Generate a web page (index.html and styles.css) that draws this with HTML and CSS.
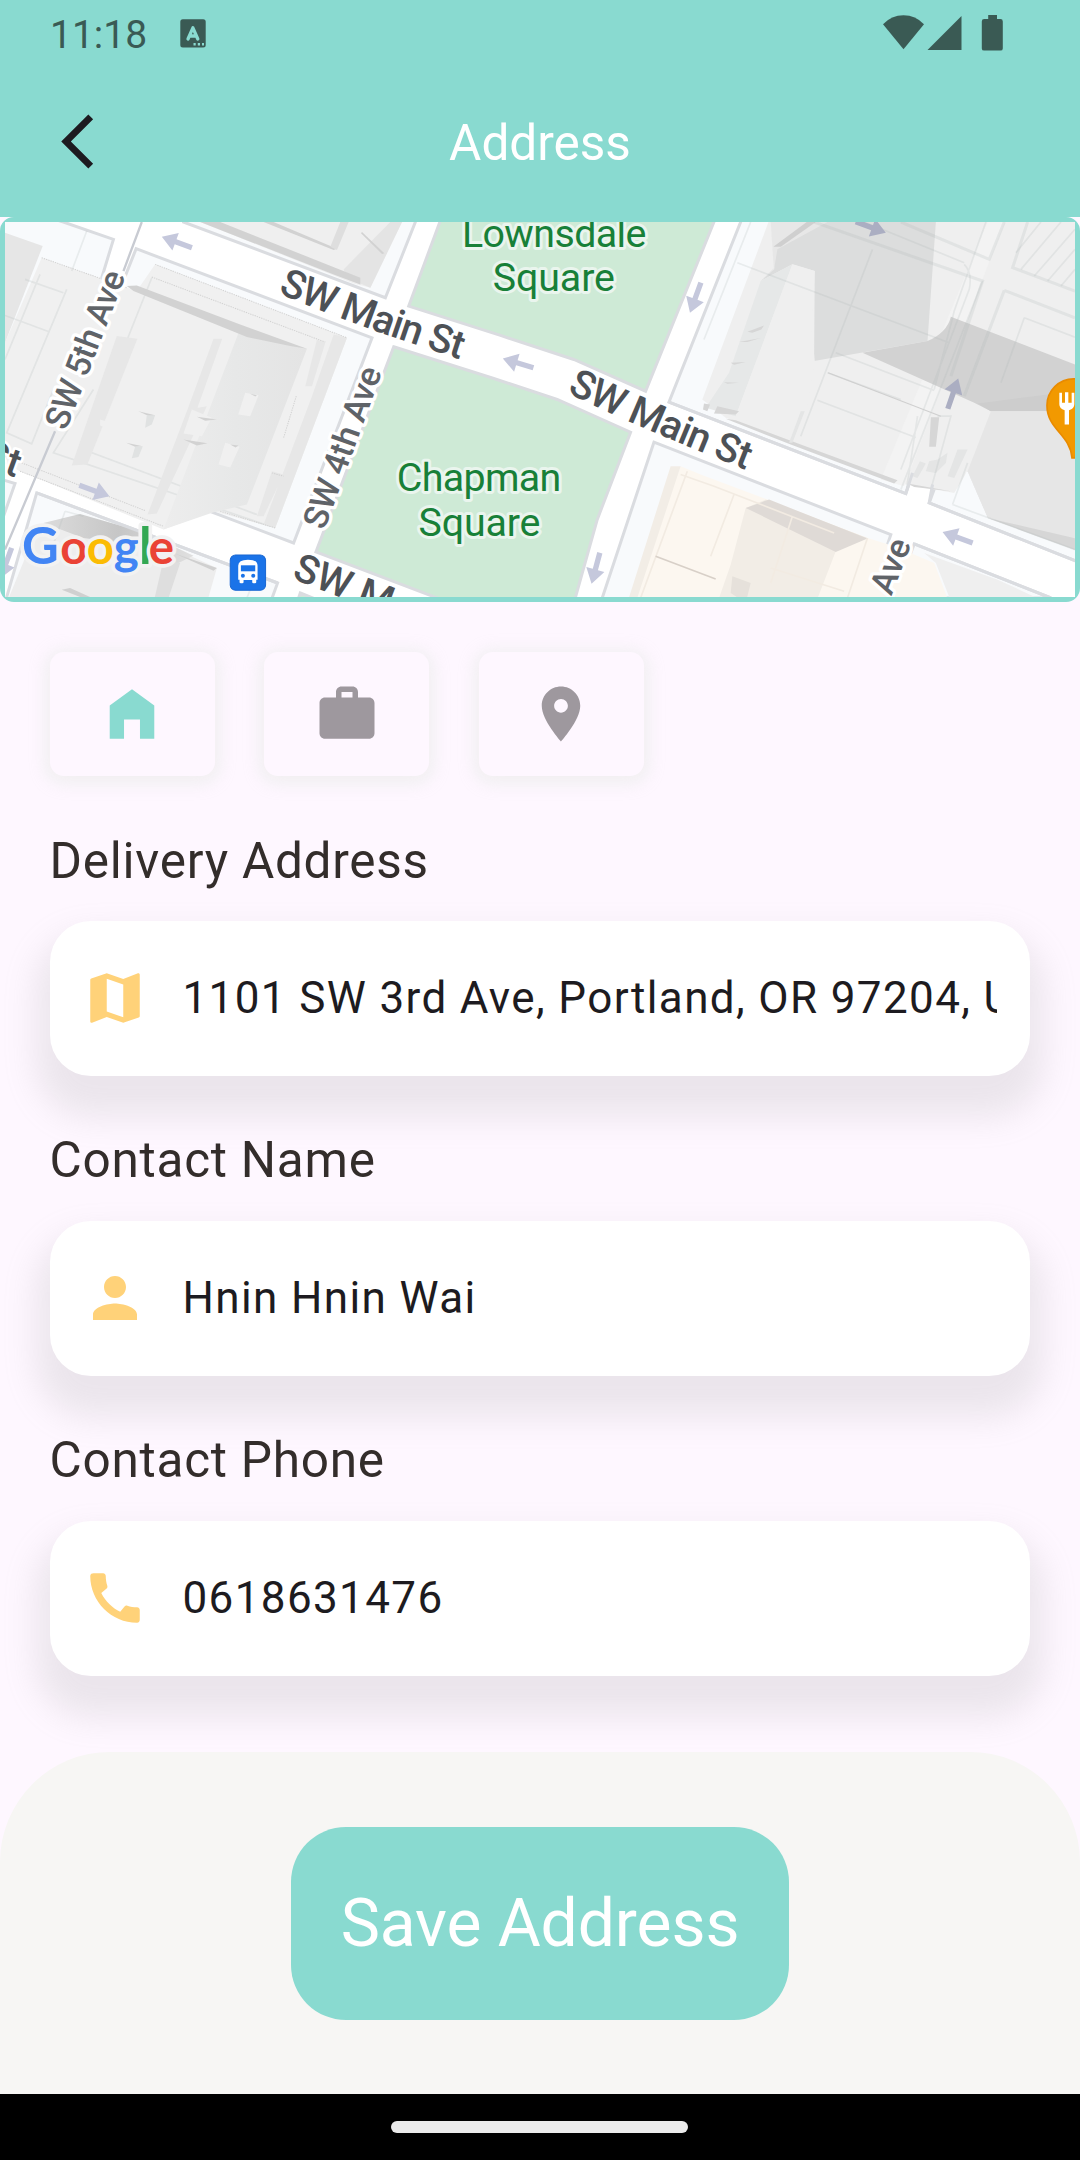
FILE: index.html
```html
<!DOCTYPE html>
<html lang="en">
<head>
<meta charset="utf-8">
<title>Address</title>
<link rel="stylesheet" href="styles.css">
</head>
<body>
<div class="screen">
  <header class="header">
    <div class="status-bar">
      <div class="status-left">
        <span class="clock">11:18</span>
        <svg class="status-app" viewBox="0 0 26 29" aria-hidden="true">
          <rect x="0.3" y="0.3" width="25.4" height="28.2" rx="2.5"/>
          <path class="cut-line" d="M8 20 12.900 8.800 17.800 20M10 17h6"/>
          <path class="cut-fill" d="M13.500 24h2.200v2.400h-2.200zM17.800 24H20v2.400h-2.200zM22 24h2v2.400h-2z"/>
        </svg>
      </div>
      <svg class="status-icons" viewBox="0 0 120 36" aria-hidden="true">
        <path d="M0 9.300Q8.500 0.300 20.500 0.300T41 9.300L20.500 34.300Z"/>
        <path d="M78.500 1v34H44.500Z"/>
        <path d="M105.200 0h8.800v4h3.400q2.400 0 2.400 2.400v27q0 2.200-2.400 2.200H101.200q-2.400 0-2.400-2.200v-27Q98.800 4 101.200 4h4Z"/>
      </svg>
    </div>
    <div class="app-bar">
      <button class="back" aria-label="Back">
        <svg viewBox="0 0 24 24"><path d="M17.770 3.770 16 2 6 12l10 10 1.770-1.770L9.540 12z"/></svg>
      </button>
      <h1 class="title">Address</h1>
      <span class="bar-end"></span>
    </div>
  </header>

  <div class="map-frame">
    <svg class="map" viewBox="15 38 3207 1124" preserveAspectRatio="none">
      <defs>
        <path id="arrow" d="M0 0 44-28V-8H96V8H44V28Z"/>
        <path id="main-west" d="M832 250Q1060 350 1450 472"/>
        <path id="main-east" d="M1698 548Q1880 642 2300 806"/>
        <linearGradient id="shade" x1="0" x2="1"><stop offset="0" stop-color="#dcdcdc"/><stop offset=".5" stop-color="#c6c6c6"/><stop offset="1" stop-color="#e0e0e0"/></linearGradient>
        <linearGradient id="fade" x1="0" x2="1"><stop offset="0" stop-color="#ededed"/><stop offset=".5" stop-color="#e7e8e8"/><stop offset="1" stop-color="#e4e4e4"/></linearGradient>
      </defs>
      <rect x="0" y="0" width="3240" height="1200" fill="#fff"/>

      <!-- city blocks -->
      <g class="block">
        <path d="M0-20 190 38 340 90 305 205 100 790 0 740Z"/>
        <path d="M408 118 1115 385 880 1000 165 730Z"/>
        <path d="M550 38 1155 265 1245 38V0H550Z"/>
        <path d="M110 850 832 1120 810 1180H15Z"/>
        <path d="M0 808 45 822 0 950Z"/>
        <path d="M2005 578 2715 852 2770 690 3240 400V0H2235Z"/>
        <path d="M2785 880 3240 1060V400L2960 400Z"/>
        <path d="M1960 698 2670 975 2600 1180H1800Z"/>
        <path d="M2740 1003 3150 1165H2680Z"/>
      </g>
      <g class="park">
        <path d="M1325 20H2147L1935 545 1720 450 1500 378 1225 290Z"/>
        <path d="M1180 412 1480 507 1670 570 1890 668 1790 930 1720 1180H1350L947 1027Z"/>
        <path d="M900 1150 975 1180H890Z"/>
      </g>

      <!-- upper left and main west building -->
      <path fill="#f0f0f0" d="M125 145 305 208 380 235 410 245 465 165 1040 385 825 955 640 905 490 960 60 785 15 760V400Z"/>
      <path fill="#e6e6e6" d="M15 70 128 110 15 400Z"/>
      <path class="seam" d="M260 65 215 185M75 210 190 250M120 195 15 450M15 318 145 366M200 240 20 670 95 703 160 540M455 205 250 720 770 915M280 540 160 730 810 950"/>
      <path fill="#e7e7e7" d="M350 380 412 388 262 765 215 768Z"/>
      <path fill="url(#fade)" d="M715 370 920 418 740 885 640 908 490 960Z"/>
      <path fill="#e7e7e7" d="M640 388H666L590 600H562ZM562 600 620 590 470 912 442 915ZM1000 375 1040 385 825 955 790 945 935 560ZM950 390 975 400 935 530H915ZM815 785 850 795 790 920H770Z"/>
      <path fill="#f0f0f0" d="M735 550 775 557 750 620 714 615ZM575 600 635 625 605 680 550 672ZM675 700 718 712 690 774 655 765ZM300 630 340 642 325 657 300 648Z"/>
      <path fill="#d2d2d2" d="M380 230 410 228 720 345 920 418 870 410 740 383 400 245ZM590 622 650 630 615 634ZM550 690 622 701 590 708ZM415 605 465 617 450 622ZM378 700 428 710 405 712ZM690 705 715 708 706 714ZM750 553 770 557 765 561Z"/>
      <path fill="#e0e2e2" d="M440 617 465 617 455 645 435 655ZM405 712 428 710 415 742 395 746Z"/>
      <path class="dots" d="M125 145 380 235M465 165 1040 385M455 203 975 398M65 760 435 903M60 785 490 950M660 905 825 955M815 790 850 800M888 560 850 685"/>

      <!-- bottom left building -->
      <path fill="#ededed" d="M100 950 240 915 430 975 650 1075 620 1180H20L110 960Z"/>
      <path fill="url(#shade)" d="M130 940 240 913 430 968 580 1038 530 1062 440 1010 250 985Z"/>
      <path fill="#dedede" d="M490 1050 540 1060 500 1180H460Z"/>
      <path fill="#d0d0d0" d="M185 1140 210 1135 270 1162H240ZM520 1030 650 1075 640 1083Z"/>
      <path class="seam" d="M195 905 140 1060M750 1140 740 1165M195 905 250 920"/>

      <!-- top building -->
      <path fill="#efefef" d="M600 38H1205L1110 235 1060 222Z"/>
      <path fill="#e4e4e4" d="M1170 38H1205L1110 235 1040 205 1030 180Z"/>
      <path fill="#d2d2d2" d="M600 38H660L1080 205V225L1000 195ZM790 38H820L1010 118 1000 122ZM1085 68 1152 132 1145 134 1082 72Z"/>
      <path fill="#dedede" d="M1020 38H1045L1010 122 990 112Z"/>

      <!-- east buildings -->
      <path fill="#efefef" d="M2310 20H3240V1028L2960 925 2900 785 2860 850 2690 820 2175 625 2105 570Z"/>
      <path fill="#f3f3f3" d="M2960 38H3010L2710 830 2640 810Z"/>
      <path fill="#e4e4e4" d="M2310 38H2540L2330 165 2285 210 2320 190Z" opacity=".7"/>
      <path fill="#dcdddd" d="M2480 38H2805L2780 395 2440 455 2442 185 2375 165 2280 215 2320 180 2330 120Z"/>
      <path fill="#cfcfcf" d="M2418 38H2445L2340 112 2318 112Z"/>
      <path fill="#e6e8e8" d="M2280 215 2375 165 2205 620 2115 595 2185 490Z"/>
      <path fill="#efefef" d="M2375 165 2442 185 2432 350 2442 455 2400 700 2205 620Z"/>
      <path fill="#d2d2d2" d="M2585 430 2780 395Q2838 370 2850 322L3240 472V605H2970L2920 580Z"/>
      <path fill="#cdcdcd" d="M2970 605 2930 582 3240 542V605Z"/>
      <path fill="#e6e6e6" d="M2970 605H3240V1000L2960 925 2900 785Z"/>
      <path fill="#f8fafc" d="M2897 785 2960 925 2860 885Z"/>
      <path fill="#d6d6d6" d="M2175 628 2205 632 2400 705 2690 812 2680 822 2370 705ZM2720 822 2850 845 2740 832ZM2960 925 3240 990V1028ZM2240 367 2290 348 2282 360 2255 370ZM2215 398 2280 386 2240 398ZM2190 460 2235 458 2200 466ZM2170 518 2215 520 2180 523ZM2790 623H2815L2805 712H2785ZM2110 582 2128 585 2120 605 2107 600ZM2150 590 2215 605 2205 615 2140 612Z"/>
      <path fill="#e4e5e5" d="M2757 755 2775 762 2750 805 2735 800ZM2785 755 2810 750 2840 730 2835 760 2805 790 2775 785ZM2870 720H2900L2860 805 2840 800ZM2400 605H2412L2375 700H2365Z"/>
      <path class="seam" d="M2250 38 2110 390M2210 160 2845 400M2615 120 2400 680M2505 430 2800 543M2450 572 2745 684M2480 490 2700 570M2955 38 2860 305 2800 540M2750 620 2715 852M2945 215 2700 840M2810 620 2850 620 2790 840M2890 165Q2915 190 2905 240L2700 780M3070 325 3222 383M3070 325 3000 520M2590 38 2890 160M2855 885 2900 760M2855 885 3222 1020"/>
      <path class="road-seam" d="M2700 38 2965 150 3010 38M3080 38 3035 175 3222 245M2440 38 2945 215 2850 500M3010 243 3222 325M3010 243 2890 560"/>
      <path class="seam" d="M3222 60 3100 200M3222 120 3140 215M3222 180 3180 230M3180 38 3060 180M3120 38 3045 130"/>
      <path stroke="#cfcfcf" stroke-width="3" fill="none" d="M2482 490 2820 620"/>

      <!-- south-east building -->
      <path fill="#fcf7f0" d="M2040 770 2100 795 2300 870 2600 985 2680 1010 2800 1060 2845 1180H1885Z"/>
      <path fill="#f2ede6" d="M2010 770 2040 770 1905 1180H1880ZM2235 895 2295 870 2600 985 2505 1025 2445 1180H2150L2190 1065Z"/>
      <path fill="#dfdad6" d="M2235 895 2305 870 2600 987 2505 1027Z"/>
      <path fill="#e6e1db" d="M2195 1100 2250 1120 2235 1180 2190 1150Z"/>
      <path class="beige-seam" d="M2040 795 2140 830 2500 970M2200 855 2130 1040M2375 920 2310 1120M2310 1075 2530 1145M2060 785 1920 1165M2600 985 2540 1165"/>
      <path stroke="#d8d0c8" stroke-width="5" fill="none" d="M1965 1040 2145 1108"/>
      <path fill="#efefef" d="M2770 1030 2990 1110 3130 1175H2850L2805 1060Z"/>

      <!-- kerb lines that stay above the buildings -->
      <path class="kerb" d="M2005 578 2715 852 2735 790M2795 825 2785 880 3240 1060M2740 1003 3150 1165M110 850 832 1120"/>
      <path class="avenue-line" d="M425 38 370 185M165 665 15 1020"/>

      <g fill="#c5c8dc">
        <use href="#arrow" transform="translate(485 82) rotate(20)"/>
        <use href="#arrow" transform="translate(328 860) rotate(200)"/>
        <use href="#arrow" transform="translate(1507 447) rotate(17)"/>
        <use href="#arrow" transform="translate(2068 310) rotate(-70)"/>
        <use href="#arrow" transform="translate(1773 1122) rotate(-75)"/>
        <use href="#arrow" transform="translate(2825 967) rotate(20)"/>
        <use href="#arrow" transform="translate(2 1105) rotate(-70)"/>
      </g>
      <g fill="#abaec2">
        <use href="#arrow" transform="translate(2655 70) rotate(200)"/>
        <use href="#arrow" transform="translate(2872 507) rotate(109)"/>
      </g>

      <g class="street">
        <text><textPath href="#main-west" textLength="582">SW Main St</textPath></text>
        <text><textPath href="#main-east" textLength="586">SW Main St</textPath></text>
        <text transform="translate(872 1106) rotate(21)">SW M</text>
        <text transform="translate(46 804) rotate(20)" text-anchor="end">St</text>
      </g>
      <g class="avenue">
        <text transform="translate(198 666) rotate(-69)" textLength="500">SW 5th Ave</text>
        <text transform="translate(972 964) rotate(-70)" textLength="508">SW 4th Ave</text>
        <text transform="translate(2732 1002) rotate(-69)" text-anchor="end">Ave</text>
      </g>
      <g class="park-name">
        <text x="1661" y="112" textLength="553">Lownsdale</text>
        <text x="1660" y="246" textLength="366">Square</text>
        <text x="1436" y="844" textLength="493">Chapman</text>
        <text x="1437" y="978" textLength="366">Square</text>
      </g>
      <text class="brand" y="1064"><tspan class="brand-tall" x="66" fill="#4285f4">G</tspan><tspan x="181" fill="#ea4335">o</tspan><tspan x="260" fill="#fbbc04">o</tspan><tspan x="341" fill="#4285f4">g</tspan><tspan class="brand-tall" x="417" fill="#34a853">l</tspan><tspan x="446" fill="#ea4335">e</tspan></text>

      <!-- transit stop -->
      <rect x="690" y="1036" width="106" height="106" rx="16" fill="#1a73e8" stroke="#1967d2" stroke-width="3"/>
      <path fill="#fff" d="M714 1068Q714 1050 743 1050T772 1068V1110H768V1118Q768 1121 764 1121H760Q756 1121 756 1118V1111H730V1118Q730 1121 726 1121H722Q718 1121 718 1118V1110H714Z"/>
      <path fill="#1a73e8" d="M722 1067H765V1085H722Z"/>
      <circle cx="728" cy="1098" r="6" fill="#1a73e8"/><circle cx="759" cy="1098" r="6" fill="#1a73e8"/>

      <!-- restaurant pin -->
      <path fill="#f29900" stroke="#e98b00" stroke-width="5" d="M3213 745C3208 675 3138 660 3138 588A80 80 0 0 1 3298 588C3298 660 3228 675 3223 745Z"/>
      <path fill="#fff" d="M3175 550H3183V580H3192V548H3202V580H3212V550H3220V584Q3220 597 3204 602V645H3191V602Q3175 597 3175 584Z"/>
    </svg>
  </div>

  <main class="content">
    <div class="types">
      <button class="type type-active" aria-label="Home"><svg viewBox="0 0 24 24"><path d="M12 3 3.900 8.900V21h5.200v-7h5.800v7h5.200V8.900z"/></svg></button>
      <button class="type" aria-label="Work"><svg viewBox="0 0 24 24"><path d="M20 6h-4V4c0-1.110-.89-2-2-2h-4c-1.110 0-2 .89-2 2v2H4c-1.110 0-1.990.89-1.990 2L2 19c0 1.110.89 2 2 2h16c1.110 0 2-.89 2-2V8c0-1.110-.89-2-2-2zm-6 0h-4V4h4v2z"/></svg></button>
      <button class="type" aria-label="Other"><svg viewBox="0 0 24 24"><path d="M12 2C8.130 2 5 5.130 5 9c0 5.250 7 13 7 13s7-7.750 7-13c0-3.870-3.130-7-7-7zm0 9.500c-1.380 0-2.500-1.120-2.500-2.500s1.120-2.500 2.500-2.500 2.500 1.120 2.500 2.500-1.120 2.500-2.500 2.500z"/></svg></button>
    </div>

    <section class="group">
      <h2 class="label">Delivery Address</h2>
      <div class="field">
        <svg viewBox="0 0 24 24"><path d="M20.500 3l-.16.030L15 5.100 9 3 3.360 4.900c-.21.070-.36.250-.36.480V20.500c0 .28.220.5.500.5l.16-.030L9 18.900l6 2.100 5.640-1.900c.21-.070.36-.25.360-.48V3.500c0-.28-.22-.5-.5-.5zM15 19l-6-2.110V5l6 2.110V19z"/></svg>
        <div class="value">1101 SW 3rd Ave, Portland, OR 97204, USA</div>
      </div>
    </section>
    <section class="group">
      <h2 class="label">Contact Name</h2>
      <div class="field">
        <svg viewBox="0 0 24 24"><path d="M12 12c2.210 0 4-1.790 4-4s-1.790-4-4-4-4 1.790-4 4 1.790 4 4 4zm0 2c-2.670 0-8 1.340-8 4v2h16v-2c0-2.660-5.330-4-8-4z"/></svg>
        <div class="value">Hnin Hnin Wai</div>
      </div>
    </section>
    <section class="group">
      <h2 class="label">Contact Phone</h2>
      <div class="field">
        <svg viewBox="0 0 24 24"><path d="M20.010 15.380c-1.230 0-2.420-.2-3.530-.56-.35-.12-.74-.030-1.010.24l-1.570 1.970c-2.830-1.350-5.480-3.900-6.890-6.830l1.950-1.660c.27-.28.35-.67.240-1.020-.37-1.110-.56-2.300-.56-3.530 0-.54-.45-.99-.99-.99H4.190C3.650 3 3 3.240 3 3.990 3 13.280 10.730 21 20.010 21c.71 0 .99-.63.99-1.180v-3.450c0-.54-.45-.99-.99-.99z"/></svg>
        <div class="value">0618631476</div>
      </div>
    </section>
  </main>

  <footer class="actions"><button class="save">Save Address</button></footer>
  <div class="nav-bar"><span class="handle"></span></div>
</div>
</body>
</html>
```
FILE: styles.css
```css
* {
  box-sizing: border-box;
}

body {
  margin: 0;
  font-family: Roboto, sans-serif;
  background: #fef7ff;
}

button {
  border: 0;
  padding: 0;
  font: inherit;
}

svg {
  display: block;
}

.screen {
  width: 1080px;
  height: 2160px;
  display: flex;
  flex-direction: column;
  overflow: hidden;
  background: #fef7ff;
}

.header {
  flex: none;
  height: 217px;
  background: #89dad0;
}

.status-bar {
  height: 66px;
  padding: 15px 77px 0 50px;
  display: flex;
  justify-content: space-between;
  align-items: flex-start;
  color: #3a5a54;
}

.status-left {
  display: flex;
  gap: 33px;
}

.clock {
  font-size: 39px;
  line-height: 40px;
}

.status-app {
  width: 26px;
  height: 29px;
  margin-top: 4px;
  fill: currentColor;
}

.status-app .cut-line {
  fill: none;
  stroke: #89dad0;
  stroke-width: 3.3;
  stroke-linecap: round;
  stroke-linejoin: round;
}

.status-app .cut-fill {
  fill: #89dad0;
}

.status-icons {
  width: 120px;
  height: 36px;
  fill: currentColor;
}

.app-bar {
  height: 151px;
  padding: 0 45px;
  display: flex;
  align-items: center;
  justify-content: space-between;
}

.back,
.bar-end {
  width: 65px;
  height: 65px;
  background: none;
}

.back svg {
  width: 65px;
  height: 65px;
  fill: #1d1b20;
}

.title {
  margin: 3px 0 0;
  font-size: 49.5px;
  line-height: 58px;
  font-weight: 400;
  color: #fff;
}

.map-frame {
  flex: none;
  height: 385px;
  border: 5px solid #89dad0;
  border-radius: 14px;
  background: #89dad0;
}

.map {
  width: 100%;
  height: 375px;
}

.block path {
  fill: #f8fafc;
  stroke: #dadce0;
  stroke-width: 9;
}

.park path {
  fill: #ceead6;
  stroke: #dadce0;
  stroke-width: 9;
}

.seam,
.road-seam,
.beige-seam,
.kerb,
.avenue-line,
.dots {
  fill: none;
}

.seam {
  stroke: rgba(170, 180, 180, 0.2);
  stroke-width: 5;
}

.road-seam {
  stroke: rgba(170, 180, 180, 0.2);
  stroke-width: 9;
}

.beige-seam {
  stroke: #f2ebe2;
  stroke-width: 5;
}

.kerb {
  stroke: #dadce0;
  stroke-width: 9;
}

.avenue-line {
  stroke: #c8cbd2;
  stroke-width: 7;
}

.dots {
  stroke: #d2d2d2;
  stroke-width: 3;
  stroke-dasharray: 4 3;
}

.street,
.avenue,
.park-name,
.brand {
  paint-order: stroke;
  stroke-linejoin: round;
}

.street {
  font-size: 119px;
  font-weight: 500;
  fill: #4d5156;
  stroke: #fff;
  stroke-width: 16px;
}

.avenue {
  font-size: 102px;
  font-weight: 500;
  fill: #5f6368;
  stroke: #fff;
  stroke-width: 20px;
}

.park-name {
  font-size: 118px;
  fill: #188038;
  stroke: #eaf5ee;
  stroke-width: 18px;
  text-anchor: middle;
}

.brand {
  font-family: Lato, sans-serif;
  font-size: 142px;
  font-weight: 700;
  stroke: #f2f2f2;
  stroke-width: 22px;
}

.brand-tall {
  font-size: 152px;
}

.content {
  flex: none;
  height: 1150px;
  padding: 50px 50px 0 49.5px;
}

.types {
  display: flex;
  gap: 49.5px;
}

.type {
  width: 165px;
  height: 124px;
  display: flex;
  align-items: center;
  justify-content: center;
  border-radius: 14px;
  background: #fef7ff;
  box-shadow: 0 3px 16px 5px rgba(238, 238, 238, 0.8);
  color: #9e989e;
}

.type-active {
  color: #89dad0;
}

.type svg {
  width: 66px;
  height: 66px;
  fill: currentColor;
}

.group {
  padding-top: 55px;
}

.types + .group {
  padding-top: 55.5px;
}

.label {
  position: relative;
  z-index: 1;
  margin: 0 0 32.5px;
  font-size: 49.5px;
  line-height: 58px;
  font-weight: 400;
  letter-spacing: 0.75px;
  color: #332d2b;
}

.types + .group .label {
  margin-bottom: 31.5px;
}

.field {
  height: 154.5px;
  padding: 0 33px 0 32.5px;
  display: flex;
  align-items: center;
  border-radius: 41px;
  background: #fff;
  box-shadow: 0 27px 33px 14px rgba(158, 158, 158, 0.2);
}

.field svg {
  flex: none;
  width: 66px;
  height: 66px;
  margin-right: 34.5px;
  fill: #ffd279;
}

.value {
  flex: 1;
  overflow: hidden;
  white-space: nowrap;
  font-size: 44px;
  line-height: 60px;
  letter-spacing: 1.375px;
  color: #1d1b20;
}

.actions {
  position: relative;
  flex: none;
  height: 342px;
  display: flex;
  align-items: center;
  justify-content: center;
  border-radius: 110px 110px 0 0;
  background: #f7f6f4;
}

.save {
  width: 498px;
  height: 193px;
  border-radius: 55px;
  background: #89dad0;
  color: #fff;
  font-size: 66px;
  letter-spacing: -0.1px;
}

.nav-bar {
  flex: 1;
  display: flex;
  align-items: center;
  justify-content: center;
  background: #000;
}

.handle {
  width: 297px;
  height: 12px;
  margin: 0 1px 1px 0;
  border-radius: 6px;
  background: #ebebeb;
}
```
